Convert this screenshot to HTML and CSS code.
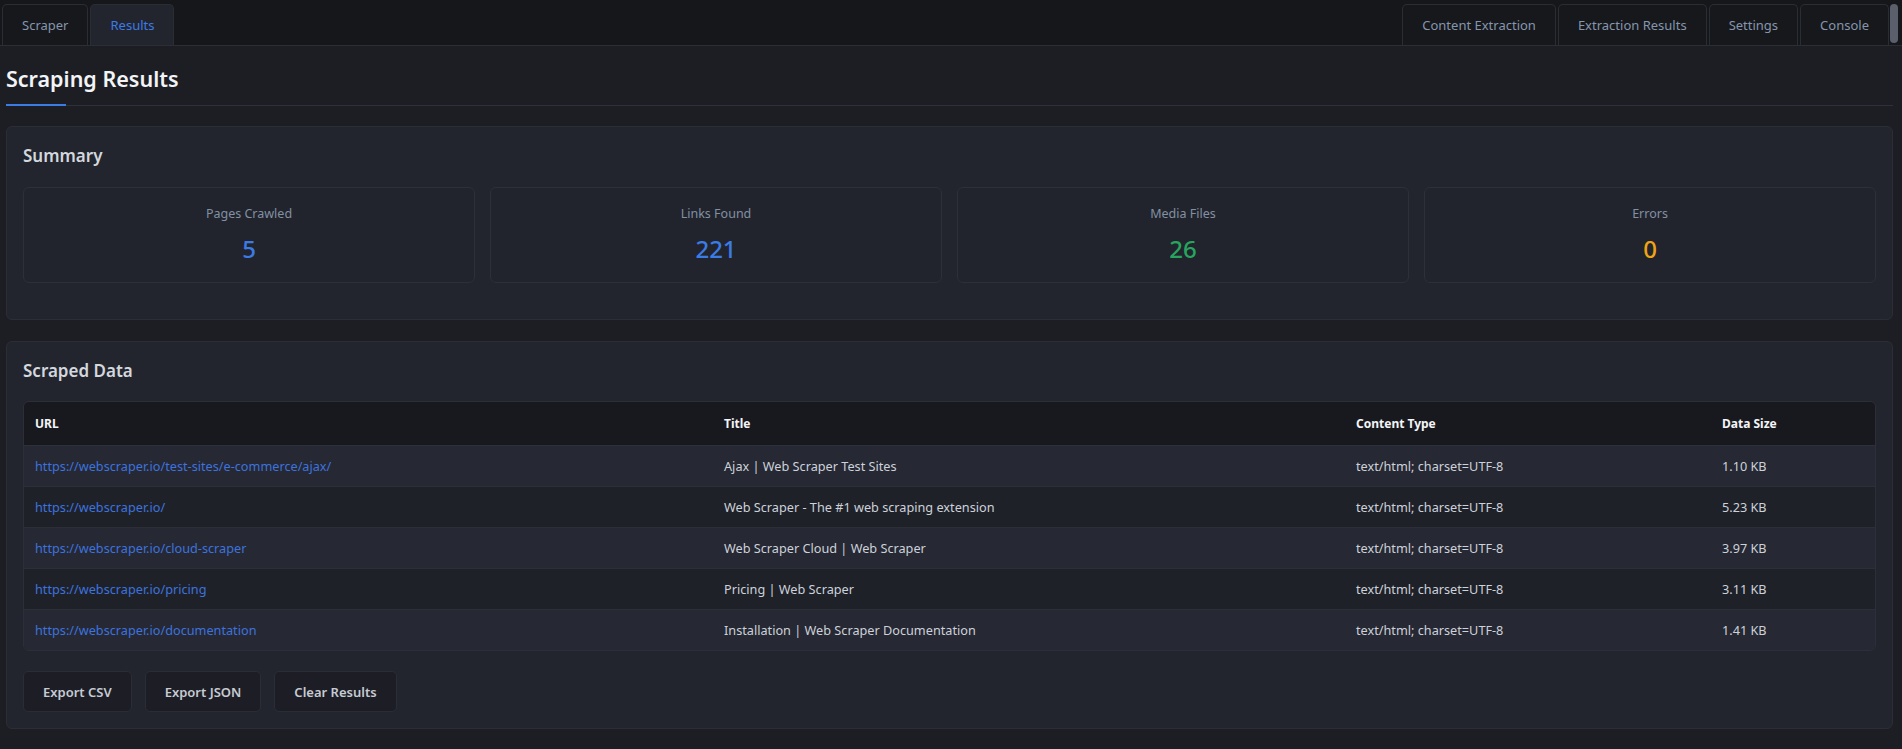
FILE: index.html
```html
<!DOCTYPE html>
<html lang="en">
<head>
<meta charset="utf-8">
<title>Scraping Results</title>
<link rel="stylesheet" href="styles.css">
</head>
<body>
<div class="app">
  <nav class="tabbar">
    <div class="tab-group">
      <button class="tab">Scraper</button>
      <button class="tab active">Results</button>
    </div>
    <div class="tab-group tab-group-right">
      <button class="tab">Content Extraction</button>
      <button class="tab">Extraction Results</button>
      <button class="tab">Settings</button>
      <button class="tab">Console</button>
      <span class="scroll-thumb"></span>
    </div>
  </nav>
  <main class="main">
    <header class="page-head">
      <h1 class="page-title">Scraping Results</h1>
      <div class="rule"><span class="rule-accent"></span><span class="rule-line"></span></div>
    </header>

    <section class="card">
      <h2 class="card-title">Summary</h2>
      <div class="stats">
        <div class="stat"><div class="stat-label">Pages Crawled</div><div class="stat-value blue">5</div></div>
        <div class="stat"><div class="stat-label">Links Found</div><div class="stat-value blue">221</div></div>
        <div class="stat"><div class="stat-label">Media Files</div><div class="stat-value green">26</div></div>
        <div class="stat"><div class="stat-label">Errors</div><div class="stat-value orange">0</div></div>
      </div>
    </section>

    <section class="card">
      <h2 class="card-title card-title-data">Scraped Data</h2>
      <div class="table-wrap">
        <table class="data">
          <colgroup>
            <col class="col-url"><col class="col-title"><col class="col-type"><col class="col-size">
          </colgroup>
          <thead>
            <tr><th>URL</th><th>Title</th><th>Content Type</th><th>Data Size</th></tr>
          </thead>
          <tbody>
            <tr><td><a class="link">https://webscraper.io/test-sites/e-commerce/ajax/</a></td><td>Ajax | Web Scraper Test Sites</td><td>text/html; charset=UTF-8</td><td>1.10 KB</td></tr>
            <tr><td><a class="link">https://webscraper.io/</a></td><td>Web Scraper - The #1 web scraping extension</td><td>text/html; charset=UTF-8</td><td>5.23 KB</td></tr>
            <tr><td><a class="link">https://webscraper.io/cloud-scraper</a></td><td>Web Scraper Cloud | Web Scraper</td><td>text/html; charset=UTF-8</td><td>3.97 KB</td></tr>
            <tr><td><a class="link">https://webscraper.io/pricing</a></td><td>Pricing | Web Scraper</td><td>text/html; charset=UTF-8</td><td>3.11 KB</td></tr>
            <tr><td><a class="link">https://webscraper.io/documentation</a></td><td>Installation | Web Scraper Documentation</td><td>text/html; charset=UTF-8</td><td>1.41 KB</td></tr>
          </tbody>
        </table>
      </div>
      <div class="actions">
        <button class="btn">Export CSV</button>
        <button class="btn">Export JSON</button>
        <button class="btn">Clear Results</button>
      </div>
    </section>
  </main>
</div>
</body>
</html>
```
FILE: styles.css
```css
html, body {
  margin: 0;
  padding: 0;
  background: #1d1e23;
  font-family: "Noto Sans", "Open Sans", "DejaVu Sans", sans-serif;
  color: #c9ced6;
}

.app {
  min-height: 100vh;
  background: #1d1e23;
}

/* ---------- tab bar ---------- */
.tabbar {
  height: 46px;
  box-sizing: border-box;
  padding: 4px 0 0 2px;
  background: #16171b;
  border-bottom: 1px solid #2c2e35;
  display: flex;
  justify-content: space-between;
}
.tab-group {
  display: flex;
  gap: 2px;
}
.tab {
  font-family: inherit;
  font-size: 13px;
  color: #8496ad;
  background: #17181c;
  border: 1px solid #2b2d35;
  border-bottom: none;
  border-radius: 5px 5px 0 0;
  padding: 0 19px;
  margin: 0;
  cursor: pointer;
}
.tab.active {
  background: #23252e;
  color: #3b7be6;
}
.scroll-thumb {
  align-self: flex-start;
  width: 8px;
  height: 39px;
  margin: 0 4px 0 -1px;
  border-radius: 4px;
  background: #5b5f6b;
}

/* ---------- main ---------- */
.main {
  padding: 18px 9px 20px 6px;
}
.page-title {
  margin: 0;
  font-size: 21.5px;
  line-height: 30px;
  font-weight: 600;
  color: #f2f4f7;
}
.rule {
  margin-top: 10px;
  height: 2px;
  display: flex;
  align-items: flex-end;
}
.rule-accent {
  width: 60px;
  height: 2px;
  background: #3b7be6;
}
.rule-line {
  flex: 1;
  height: 1px;
  background: #2f313a;
}

.card {
  margin-top: 20px;
  background: #23252e;
  border: 1px solid #2c2e37;
  border-radius: 6px;
  padding: 16px;
}
.card + .card {
  margin-top: 21px;
}
.card-title {
  margin: 0 0 18px;
  font-size: 17px;
  line-height: 26px;
  font-weight: 600;
  color: #d3d7de;
}
.card-title-data {
  margin-bottom: 17px;
}

.stats {
  display: grid;
  grid-template-columns: repeat(4, 1fr);
  gap: 15px;
  margin-bottom: 20px;
}
.stat {
  background: #22242d;
  border: 1px solid #2d2f39;
  border-radius: 6px;
  padding: 17px 16px 17px;
  text-align: center;
}
.stat-label {
  font-size: 12.5px;
  line-height: 18px;
  color: #8190a3;
}
.stat-value {
  margin-top: 10px;
  font-size: 24px;
  line-height: 32px;
  font-weight: 500;
}
.blue { color: #3b7be6; }
.green { color: #27a55f; }
.orange { color: #f0a415; }

/* ---------- table ---------- */
.table-wrap {
  border: 1px solid #2d2f38;
  border-radius: 6px;
  overflow: hidden;
}
.data {
  width: 100%;
  border-collapse: collapse;
  table-layout: fixed;
  font-size: 12.7px;
}
.col-url { width: 689px; }
.col-title { width: 632px; }
.col-type { width: 366px; }
.col-size { width: 166px; }
.data th {
  height: 43px;
  padding: 0 11px;
  text-align: left;
  font-size: 12px;
  font-weight: 700;
  color: #f3f5f8;
  background: #18191e;
  border-bottom: 1px solid #2e3039;
}
.data td {
  height: 40px;
  padding: 0 11px;
  color: #cdd2da;
  border-bottom: 1px solid #2d2f38;
  white-space: nowrap;
}
.data tbody tr:nth-child(odd) { background: #262833; }
.data tbody tr:nth-child(even) { background: #1f2129; }
.data tbody tr:last-child td { border-bottom: none; }
.link {
  color: #3c73df;
  text-decoration: none;
  cursor: pointer;
}

/* ---------- actions ---------- */
.actions {
  display: flex;
  gap: 13px;
  margin-top: 20px;
}
.btn {
  height: 41px;
  padding: 0 19px;
  font-family: inherit;
  font-size: 13px;
  font-weight: 600;
  color: #c6cbd4;
  background: #1d1e25;
  border: 1px solid #2b2d36;
  border-radius: 5px;
  cursor: pointer;
}
```
